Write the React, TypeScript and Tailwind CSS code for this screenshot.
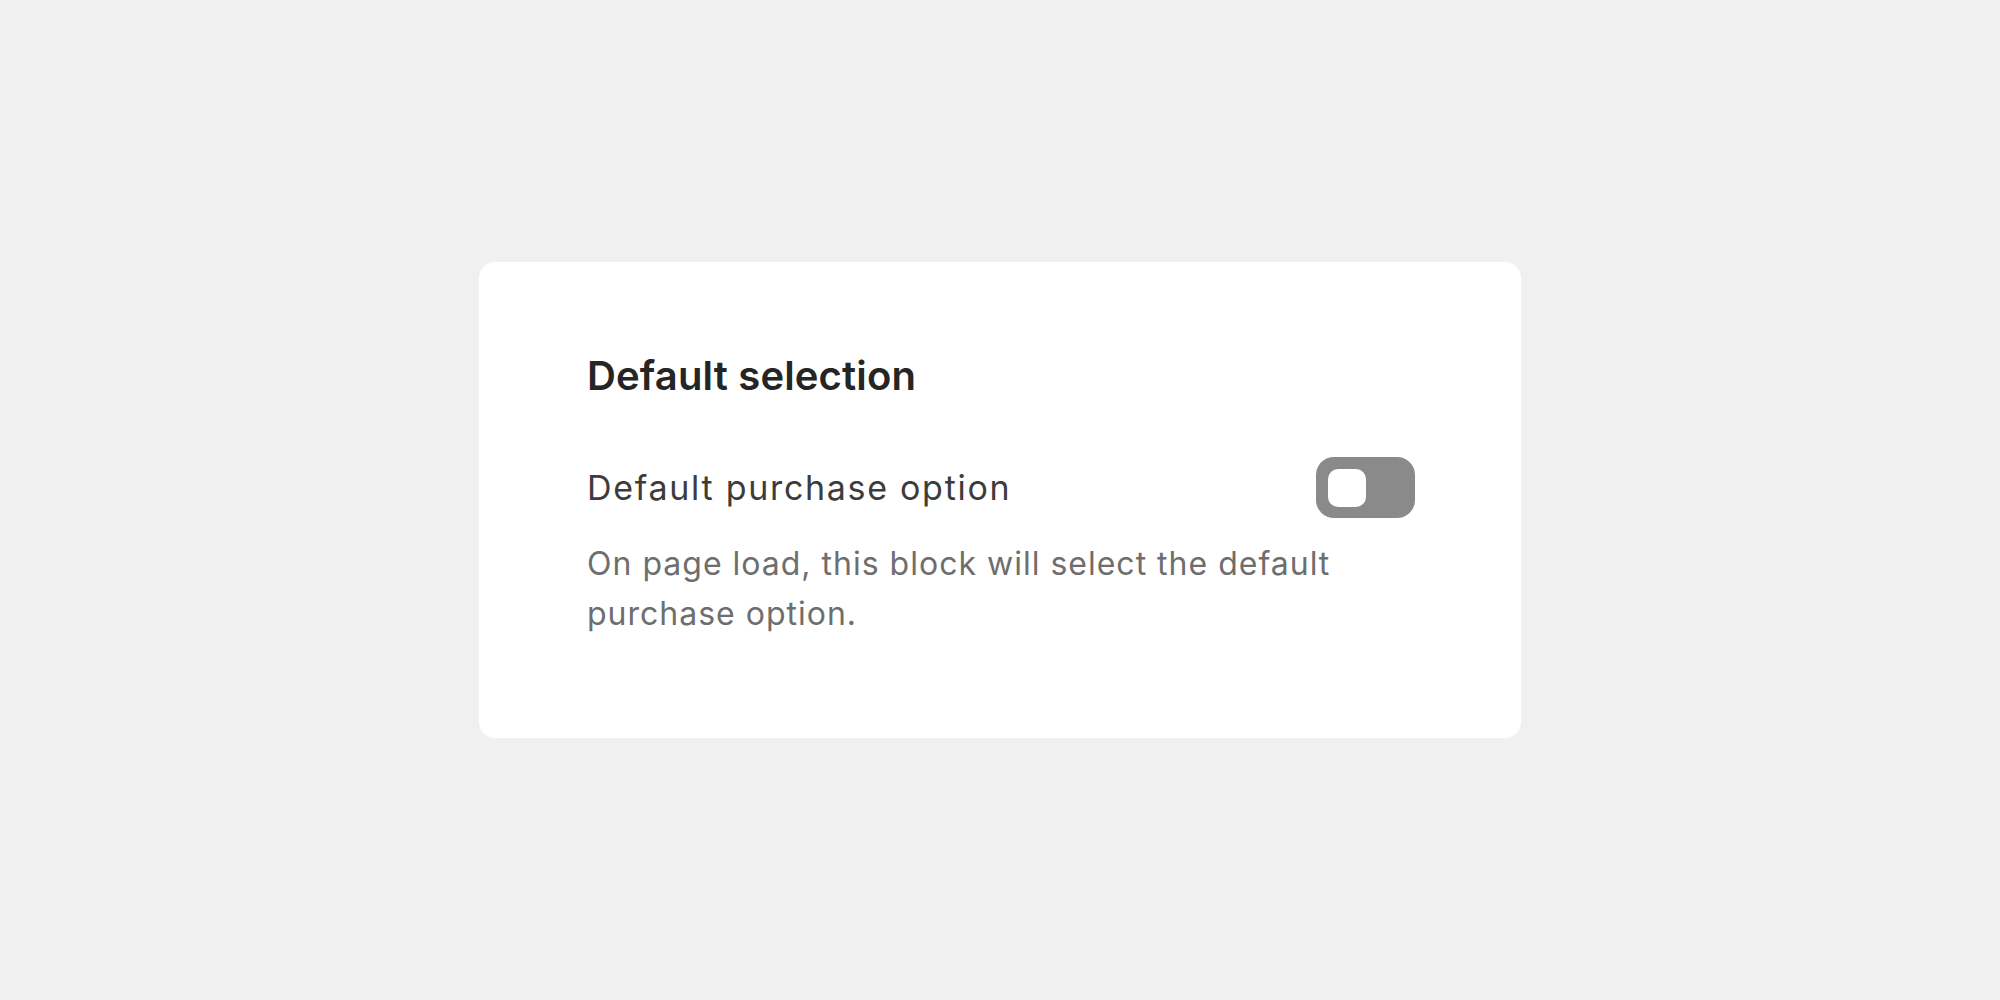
export default function App() {
  return (
    <div className="flex h-[1000px] w-full items-center justify-center bg-[#f0f0f0] font-['Inter',sans-serif]">
      <div className="h-[476px] w-[1042px] rounded-[16px] bg-white pl-[108px] pr-[106px] pt-[90px]">
        <h2 className="text-[40px] leading-[48px] font-semibold tracking-[0.15px] text-[#252525]">Default selection</h2>
        <div className="mt-[57px] flex items-center justify-between">
          <span className="text-[34px] leading-[40px] tracking-[1.7px] text-[#3c3c3c]">Default purchase option</span>
          <button
            type="button"
            aria-pressed="false"
            className="flex h-[61px] w-[99px] items-center rounded-[18px] bg-[#8a8a8a] pl-[12px]"
          >
            <span className="block h-[38px] w-[38px] rounded-[10px] bg-white" />
          </button>
        </div>
        <p className="mt-[21px] text-[32px] leading-[50px] tracking-[1px] text-[#6e6e6e]">
          On page load, this block will select the default purchase option.
        </p>
      </div>
    </div>
  );
}
